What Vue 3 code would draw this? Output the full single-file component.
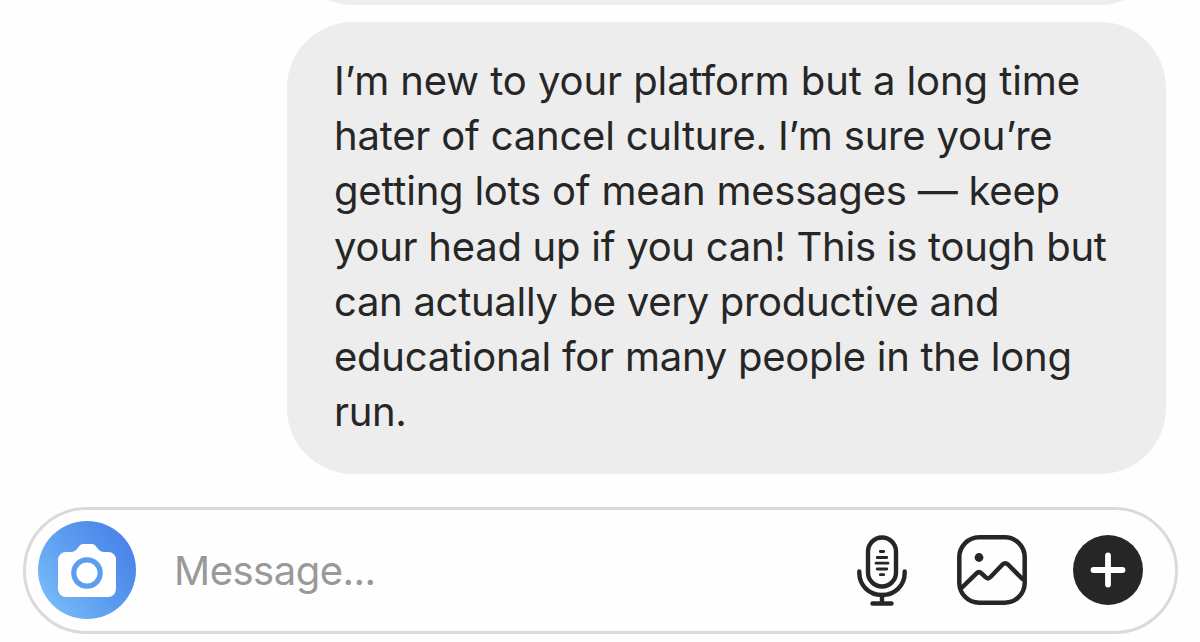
<template>
  <div class="chat">
    <div class="thread">
      <div class="bubble previous"></div>
      <div class="bubble message">
        <span v-for="line in lines" :key="line.text" class="line" :style="{ letterSpacing: line.spacing + 'px' }">{{ line.text }}</span>
      </div>
    </div>

    <div class="composer">
      <button class="camera" aria-label="Camera">
        <svg width="98" height="98" viewBox="0 0 98 98">
          <path
            d="M28 31H33C35.500 31 37 30 38.500 28.500L41 25.500C42 24 43 23 45 23H54C56 23 57 24 58 25.500L60.500 28.500C62 30 63.500 31 66 31H70.500A7.500 7.500 0 0 1 78 38.500V68A8 8 0 0 1 70 76H28A8 8 0 0 1 20 68V39A8 8 0 0 1 28 31Z"
            fill="#fff"
          />
          <circle cx="49" cy="52" r="13.200" fill="#fff" stroke="#5c9df0" stroke-width="5.200" />
        </svg>
      </button>

      <input v-model="draft" class="message-input" type="text" placeholder="Message..." />

      <div class="actions">
        <svg class="mic" width="52" height="72" viewBox="0 0 52 72" fill="none" stroke="#262626" stroke-linecap="round">
          <rect x="12" y="3.500" width="28" height="49" rx="14" stroke-width="4.400" />
          <path d="M3.300 37.500V38.500C3.300 51.500 13 61 26 61S48.700 51.500 48.700 38.500V37.500" stroke-width="4.400" />
          <path d="M26 61V69M16.500 69.500H35.500" stroke-width="4.400" />
          <path d="M24.300 17.500H27.700M21.200 23.500H30.800M20 29.200H32M21.200 35H30.800M24.300 40.700H27.700" stroke-width="2.800" />
        </svg>

        <svg class="gallery" width="70" height="72" viewBox="0 0 70 72" fill="none" stroke="#262626" stroke-width="4.500">
          <rect x="2.300" y="3.300" width="65.400" height="65.400" rx="20" />
          <circle cx="22" cy="23.500" r="4.400" fill="#262626" stroke="none" />
          <path d="M4 54.500L19.500 39.300Q22 37 24.500 39.300L28.500 43.200Q31 45.500 33.500 43L45.500 30.500Q48.300 28 51 30.500L66.500 46" stroke-linejoin="round" />
        </svg>

        <button class="add" aria-label="Add">
          <svg width="70" height="70" viewBox="0 0 70 70">
            <path d="M35 20.500V49.500M20.500 35H49.500" stroke="#fff" stroke-width="5.800" stroke-linecap="round" />
          </svg>
        </button>
      </div>
    </div>
  </div>
</template>

<script setup>
import { ref } from 'vue';

const draft = ref('');

// Letter spacing keeps each line at its own measured width
const lines = [
  { text: 'I’m new to your platform but a long time', spacing: -0.08 },
  { text: 'hater of cancel culture. I’m sure you’re', spacing: -0.2 },
  { text: 'getting lots of mean messages — keep', spacing: -0.22 },
  { text: 'your head up if you can! This is tough but', spacing: -0.26 },
  { text: 'can actually be very productive and', spacing: -0.29 },
  { text: 'educational for many people in the long', spacing: -0.25 },
  { text: 'run.', spacing: -0.4 }
];
</script>

<style>
body {
  margin: 0;
  background: #fefefe;
}
</style>

<style scoped>
.chat {
  box-sizing: border-box;
  width: 1200px;
  height: 642px;
  overflow: hidden;
  display: flex;
  flex-direction: column;
  font-family: Inter, "Liberation Sans", sans-serif;
  background: #fefefe;
}

.thread {
  display: flex;
  flex-direction: column;
  justify-content: flex-end;
  align-items: flex-end;
  gap: 17px;
  height: 474px;
  padding-right: 34px;
}

.bubble {
  box-sizing: border-box;
  flex-shrink: 0;
  width: 879px;
  border-radius: 66px;
  background: #ededed;
}

.previous {
  height: 160px;
}

.message {
  height: 452px;
  padding: 31px 47px;
  font-size: 40px;
  line-height: 55.170px;
  color: #262626;
}

.line {
  display: block;
  white-space: nowrap;
}

.composer {
  box-sizing: border-box;
  display: flex;
  align-items: center;
  flex-shrink: 0;
  width: 1155px;
  height: 127px;
  margin: 33px 0 0 23px;
  padding: 0 32px 1px 12px;
  border: 3px solid #dadada;
  border-radius: 64px;
  background: #fefefe;
}

button {
  padding: 0;
  border: none;
  border-radius: 50%;
}

button svg {
  display: block;
}

.camera {
  flex-shrink: 0;
  width: 98px;
  height: 98px;
  background: linear-gradient(55deg, #7abcf8 8%, #5b9cf0 50%, #4a83e8 88%);
}

.message-input {
  flex: 1;
  min-width: 0;
  height: 60px;
  margin-left: 38px;
  padding: 0;
  border: none;
  outline: none;
  background: transparent;
  font-family: inherit;
  font-size: 40px;
  letter-spacing: -0.5px;
  color: #262626;
}

.message-input::placeholder {
  color: #999;
  opacity: 1;
}

.actions {
  display: flex;
  align-items: center;
}

.gallery {
  margin: 0 46px 0 49px;
}

.add {
  width: 70px;
  height: 70px;
  background: #262626;
}
</style>
